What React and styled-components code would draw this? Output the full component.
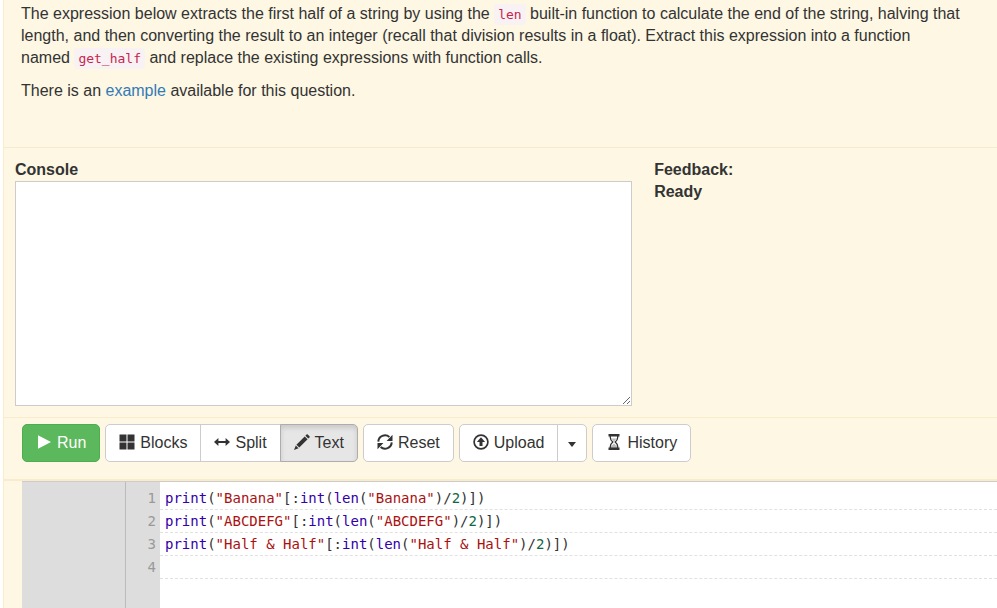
import React, { useState } from 'react'
import styled, { createGlobalStyle } from 'styled-components'

const GlobalStyle = createGlobalStyle`
    *{
        box-sizing:border-box;
    }
    body{
        margin:0;
        background:#fff;
        color:#333;
        font-family:"Liberation Sans", Arial, sans-serif;
        font-size:16px;
        line-height:22px;
    }
`

const RunIcon = () => (
  <Icon viewBox="0 0 16 16"><path d="M2 1.2 15 8 2 14.8z" /></Icon>
)

const BlocksIcon = () => (
  <Icon viewBox="0 0 16 16"><path d="M0.5 0.5h7v7h-7zM8.5 0.5h7v7h-7zM0.5 8.5h7v7h-7zM8.5 8.5h7v7h-7z" /></Icon>
)

const SplitIcon = () => (
  <Icon viewBox="0 0 16 16"><path d="M0 8 4.4 4v3h7.2V4L16 8l-4.4 4V9H4.4v3z" /></Icon>
)

const PencilIcon = () => (
  <Icon viewBox="0 0 16 16">
    <path d="M12.600.5c.4-.4.7-.4 1.100 0l1.800 1.800c.4.400.4.700 0 1.100l-1.200 1.200-2.900-2.900zM10.700 2.400l2.900 2.900-8.300 8.300-2.900-2.900zM1.800 11.400l2.800 2.800L0 16z" />
  </Icon>
)

const ResetIcon = () => (
  <Icon viewBox="0 0 16 16">
    <path d="M1.300 7.600A6.700 6.500 0 0 1 12.400 3M14.700 8.400A6.700 6.500 0 0 1 3.600 13" fill="none" stroke="currentColor" strokeWidth="2" />
    <path d="M15.500.8v6.100H9.600zM.5 15.200V9.100h5.900z" />
  </Icon>
)

const UploadIcon = () => (
  <Icon viewBox="0 0 16 16">
    <circle cx="8" cy="8" r="6.900" fill="none" stroke="currentColor" strokeWidth="1.700" />
    <path d="M8 3.200 12.100 8H9.500v4h-3V8H3.900z" />
  </Icon>
)

const HistoryIcon = () => (
  <Icon viewBox="0 0 16 16">
    <path d="M2.500 0h11v2.400h-11zM2.500 13.600h11V16h-11z" />
    <path d="M4.300 2v1.500c0 2.100 1 3.200 2.500 4.500-1.500 1.300-2.500 2.400-2.500 4.500V14M11.700 2v1.500c0 2.100-1 3.200-2.500 4.500 1.500 1.300 2.500 2.400 2.500 4.500V14" fill="none" stroke="currentColor" strokeWidth="1.300" />
    <path d="M5.500 4.500h5L8 7.500zM8 9.500l3 3V14H5v-1.500z" opacity=".35" />
  </Icon>
)

const samples = ['"Banana"', '"ABCDEFG"', '"Half & Half"']

const modes = [
  { name: 'Blocks', icon: <BlocksIcon /> },
  { name: 'Split', icon: <SplitIcon /> },
  { name: 'Text', icon: <PencilIcon /> },
]

export default function App() {
  const [mode, setMode] = useState('Text')

  return (
    <>
      <GlobalStyle />
      <Page>
        <Instructions>
          <p>
            The expression below extracts the first half of a string by using the <Code>len</Code> built-in
            function to calculate the end of the string, halving that length, and then converting the result
            to an integer (recall that division results in a float). Extract this expression into a function{' '}
            <Keep>named <Code>get_half</Code></Keep> and replace the existing expressions with function calls.
          </p>
          <p>There is an <Link href="#example">example</Link> available for this question.</p>
        </Instructions>

        <Output>
          <div>
            <Label htmlFor="console">Console</Label>
            <Console id="console" />
          </div>
          <Feedback>
            <div>Feedback:</div>
            <div>Ready</div>
          </Feedback>
        </Output>

        <Toolbar>
          <RunButton><RunIcon />Run</RunButton>
          <Group>
            {modes.map(({ name, icon }) => (
              <Button key={name} $active={mode === name} onClick={() => setMode(name)}>
                {icon}{name}
              </Button>
            ))}
          </Group>
          <Button><ResetIcon />Reset</Button>
          <Group>
            <Button><UploadIcon />Upload</Button>
            <CaretButton aria-label="More upload options"><Caret /></CaretButton>
          </Group>
          <Button><HistoryIcon />History</Button>
        </Toolbar>

        <Editor>
          <Margin />
          <Numbers>
            {[1, 2, 3, 4].map(n => <div key={n}>{n}</div>)}
          </Numbers>
          <Lines>
            {samples.map(text => (
              <Line key={text}>
                <Builtin>print</Builtin>(<Str>{text}</Str>[:<Builtin>int</Builtin>(<Builtin>len</Builtin>(<Str>{text}</Str>)/<Num>2</Num>)])
              </Line>
            ))}
            <Line />
          </Lines>
        </Editor>
      </Page>
    </>
  )
}

const Page = styled.main`
    display:flex;
    flex-direction:column;
    min-height:100vh;
    margin-left:3px;
    border-left:1px solid #faebcc;
    background:#fdf7e3;
`

const Instructions = styled.section`
    padding:3px 28px 45px 17px;
    border-bottom:1px solid #f7ebcd;
    p{
        margin:0;
    }
    p + p{
        margin-top:11px;
    }
`

const Keep = styled.span`
    white-space:nowrap;
`

const Code = styled.code`
    padding:3px 4px;
    border-radius:4px;
    background:#f9f2f4;
    color:#c7254e;
    font-family:"DejaVu Sans Mono", monospace;
    font-size:13px;
    line-height:1;
`

const Link = styled.a`
    color:#337ab7;
    text-decoration:none;
`

const Output = styled.section`
    display:grid;
    grid-template-columns:9fr 5fr;
    column-gap:22px;
    padding:11px 0 11px 11px;
    border-bottom:1px solid #faebcc;
`

const Label = styled.label`
    display:block;
    font-weight:bold;
`

const Console = styled.textarea`
    display:block;
    width:100%;
    height:225px;
    border:1px solid #ccc;
    background:#fff;
    resize:vertical;
    outline:none;
`

const Feedback = styled.div`
    font-weight:bold;
`

const Toolbar = styled.div`
    display:flex;
    flex-wrap:wrap;
    gap:5px;
    padding:6px 18px 17px;
    border-bottom:2px solid #faebcc;
`

const Group = styled.div`
    display:flex;
    button + button{
        margin-left:-1px;
    }
    button:not(:first-child){
        border-top-left-radius:0;
        border-bottom-left-radius:0;
    }
    button:not(:last-child){
        border-top-right-radius:0;
        border-bottom-right-radius:0;
    }
`

const Button = styled.button`
    display:flex;
    align-items:center;
    gap:5px;
    height:38px;
    padding:0 13px;
    border:1px solid ${props => props.$active ? '#adadad' : '#ccc'};
    border-radius:5px;
    background:${props => props.$active ? '#e6e6e6' : '#fff'};
    box-shadow:${props => props.$active ? 'inset 0 3px 5px rgba(0,0,0,0.125)' : 'none'};
    color:#333;
    font:inherit;
    cursor:pointer;
`

const RunButton = styled(Button)`
    border-color:#4cae4c;
    background:#5cb85c;
    color:#fff;
`

const CaretButton = styled(Button)`
    padding:0 10px;
`

const Caret = styled.span`
    margin-top:3px;
    border-top:5px solid #333;
    border-left:4px solid transparent;
    border-right:4px solid transparent;
`

const Icon = styled.svg`
    width:16px;
    height:16px;
    margin-bottom:2px;
    fill:currentColor;
`

const Editor = styled.section`
    display:flex;
    flex:1;
    margin-left:18px;
    border-top:1px solid #ccc;
    background:#fff;
    font-family:"DejaVu Sans Mono", monospace;
    font-size:14px;
    line-height:23px;
`

const Margin = styled.div`
    width:104px;
    border-right:1px solid #bbb;
    background:#ddd;
`

const Numbers = styled.div`
    width:34px;
    padding:5px 4px 0 0;
    background:#ddd;
    color:#999;
    text-align:right;
`

const Lines = styled.div`
    flex:1;
    padding-top:5px;
`

const Line = styled.div`
    height:23px;
    padding-left:5px;
    border-bottom:1px dashed #e1e1e1;
    white-space:pre;
`

const Builtin = styled.span`
    color:#3300aa;
`

const Str = styled.span`
    color:#aa1111;
`

const Num = styled.span`
    color:#116644;
`
